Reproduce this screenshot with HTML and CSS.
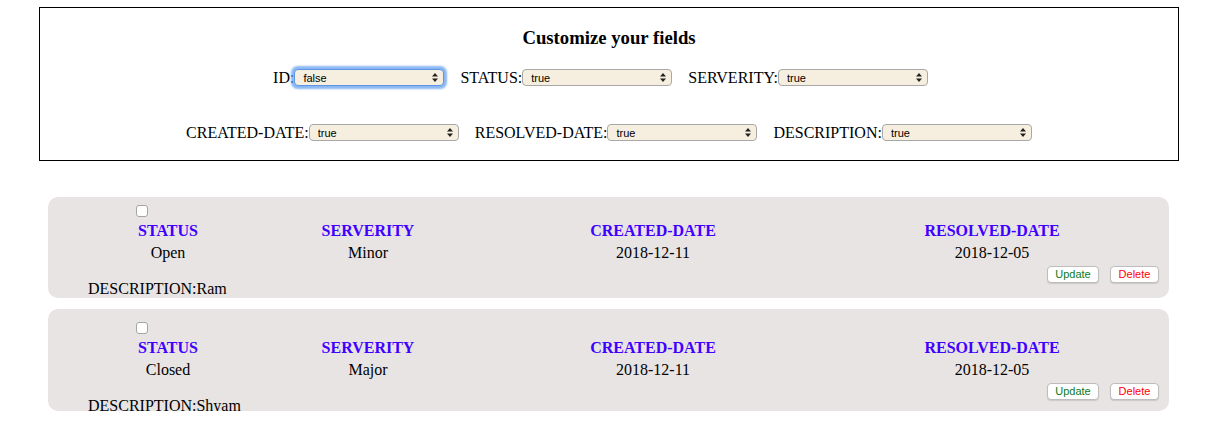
FILE: index.html
```html
<!DOCTYPE html>
<html lang="en">
<head>
<meta charset="utf-8">
<title>Customize your fields</title>
<link rel="stylesheet" href="styles.css">
</head>
<body>
<section class="panel">
  <h3 class="title">Customize your fields</h3>
  <div class="field-row field-row-first">
    <label class="field">ID:<span class="select-wrap focused"><select class="select"><option>false</option><option>true</option></select><svg class="arrows" width="6" height="9" viewBox="0 0 6 9"><path d="M3 0L6 3.4H0Z M3 9L6 5.6H0Z" fill="#222"/></svg></span></label>
    <label class="field">STATUS:<span class="select-wrap"><select class="select"><option>true</option><option>false</option></select><svg class="arrows" width="6" height="9" viewBox="0 0 6 9"><path d="M3 0L6 3.4H0Z M3 9L6 5.6H0Z" fill="#222"/></svg></span></label>
    <label class="field">SERVERITY:<span class="select-wrap"><select class="select"><option>true</option><option>false</option></select><svg class="arrows" width="6" height="9" viewBox="0 0 6 9"><path d="M3 0L6 3.4H0Z M3 9L6 5.6H0Z" fill="#222"/></svg></span></label>
  </div>
  <div class="field-row field-row-second">
    <label class="field">CREATED-DATE:<span class="select-wrap"><select class="select"><option>true</option><option>false</option></select><svg class="arrows" width="6" height="9" viewBox="0 0 6 9"><path d="M3 0L6 3.4H0Z M3 9L6 5.6H0Z" fill="#222"/></svg></span></label>
    <label class="field">RESOLVED-DATE:<span class="select-wrap"><select class="select"><option>true</option><option>false</option></select><svg class="arrows" width="6" height="9" viewBox="0 0 6 9"><path d="M3 0L6 3.4H0Z M3 9L6 5.6H0Z" fill="#222"/></svg></span></label>
    <label class="field">DESCRIPTION:<span class="select-wrap"><select class="select"><option>true</option><option>false</option></select><svg class="arrows" width="6" height="9" viewBox="0 0 6 9"><path d="M3 0L6 3.4H0Z M3 9L6 5.6H0Z" fill="#222"/></svg></span></label>
  </div>
</section>

<div class="cards">
  <div class="card">
    <input type="checkbox" class="check">
    <div class="cols">
      <div class="col-head">STATUS</div>
      <div class="col-head">SERVERITY</div>
      <div class="col-head">CREATED-DATE</div>
      <div class="col-head">RESOLVED-DATE</div>
      <div>Open</div>
      <div>Minor</div>
      <div>2018-12-11</div>
      <div>2018-12-05</div>
    </div>
    <div class="card-foot">
      <div class="desc">DESCRIPTION:Ram</div>
      <div class="actions">
        <button class="btn btn-update">Update</button>
        <button class="btn btn-delete">Delete</button>
      </div>
    </div>
  </div>
  <div class="card card-lower">
    <input type="checkbox" class="check">
    <div class="cols">
      <div class="col-head">STATUS</div>
      <div class="col-head">SERVERITY</div>
      <div class="col-head">CREATED-DATE</div>
      <div class="col-head">RESOLVED-DATE</div>
      <div>Closed</div>
      <div>Major</div>
      <div>2018-12-11</div>
      <div>2018-12-05</div>
    </div>
    <div class="card-foot">
      <div class="desc">DESCRIPTION:Shyam</div>
      <div class="actions">
        <button class="btn btn-update">Update</button>
        <button class="btn btn-delete">Delete</button>
      </div>
    </div>
  </div>
</div>
</body>
</html>
```
FILE: styles.css
```css
* {
  box-sizing: border-box;
}

body {
  margin: 0;
  font-family: "Liberation Serif", "Times New Roman", serif;
  font-size: 16px;
  color: #000;
  background: #fff;
}

.panel {
  margin: 7px 26px 0 39px;
  border: 1px solid #000;
  padding: 0 0 16.5px;
}

.title {
  margin: 18.72px 0 18.72px;
  font-size: 18.72px;
  font-weight: bold;
  text-align: center;
}

.field-row {
  display: flex;
  justify-content: center;
  align-items: center;
  gap: 16px;
  height: 21px;
}

.field-row-first {
  padding-right: 17px;
}

.field-row-second {
  margin-top: 33.6px;
}

.field {
  display: flex;
  align-items: center;
  line-height: 18px;
  white-space: nowrap;
}

.select-wrap {
  position: relative;
  display: block;
  width: 150px;
  height: 17px;
  border-radius: 4px;
}

.select {
  appearance: none;
  -webkit-appearance: none;
  display: block;
  width: 150px;
  height: 17px;
  margin: 0;
  padding: 0 0 0 8px;
  border: 1px solid #a8a8a8;
  border-radius: 4px;
  background: #f6efdf;
  font-family: "Liberation Sans", Arial, sans-serif;
  font-size: 11px;
  color: #000;
  outline: none;
}

.focused .select {
  border-color: #5d95e6;
  box-shadow: 0 0 0 1px #8ab8f3, 0 0 2px 2.5px rgba(100, 160, 240, 0.75);
}

.arrows {
  position: absolute;
  right: 6px;
  top: 4px;
  pointer-events: none;
}

.cards {
  margin: 36px 36px 0 48px;
}

.card {
  height: 101.5px;
  padding: 8px 3px 0 40px;
  background: #e8e4e3;
  border-radius: 10px;
}

.card + .card {
  margin-top: 11px;
}

.card-lower {
  padding-top: 12.5px;
}

.check {
  appearance: none;
  -webkit-appearance: none;
  display: block;
  width: 12px;
  height: 12px;
  margin: 0 0 0 48px;
  border: 1px solid #a5a5a5;
  border-radius: 3px;
  background: #fff;
}

.cols {
  display: grid;
  grid-template-columns: 160fr 240fr 330fr 348fr;
  row-gap: 4.6px;
  margin-top: 5.3px;
  line-height: 18px;
  text-align: center;
}

.col-head {
  font-weight: bold;
  color: #4000ff;
}

.card-foot {
  display: flex;
  justify-content: space-between;
  align-items: flex-start;
  margin-top: 3.8px;
}

.desc {
  padding-top: 14.2px;
  line-height: 18px;
  white-space: nowrap;
}

.actions {
  display: flex;
  gap: 11px;
  margin-right: 7px;
}

.btn {
  width: 49px;
  height: 17px;
  padding: 0;
  border: 1px solid #bdbdbd;
  border-radius: 4px;
  background: #fff;
  box-shadow: 0 1px 1px rgba(0, 0, 0, 0.12);
  font-family: "Liberation Sans", Arial, sans-serif;
  font-size: 11px;
  line-height: 15px;
}

.btn-update {
  width: 52px;
  color: #0c7a1c;
}

.btn-delete {
  color: #ff0000;
}
```
